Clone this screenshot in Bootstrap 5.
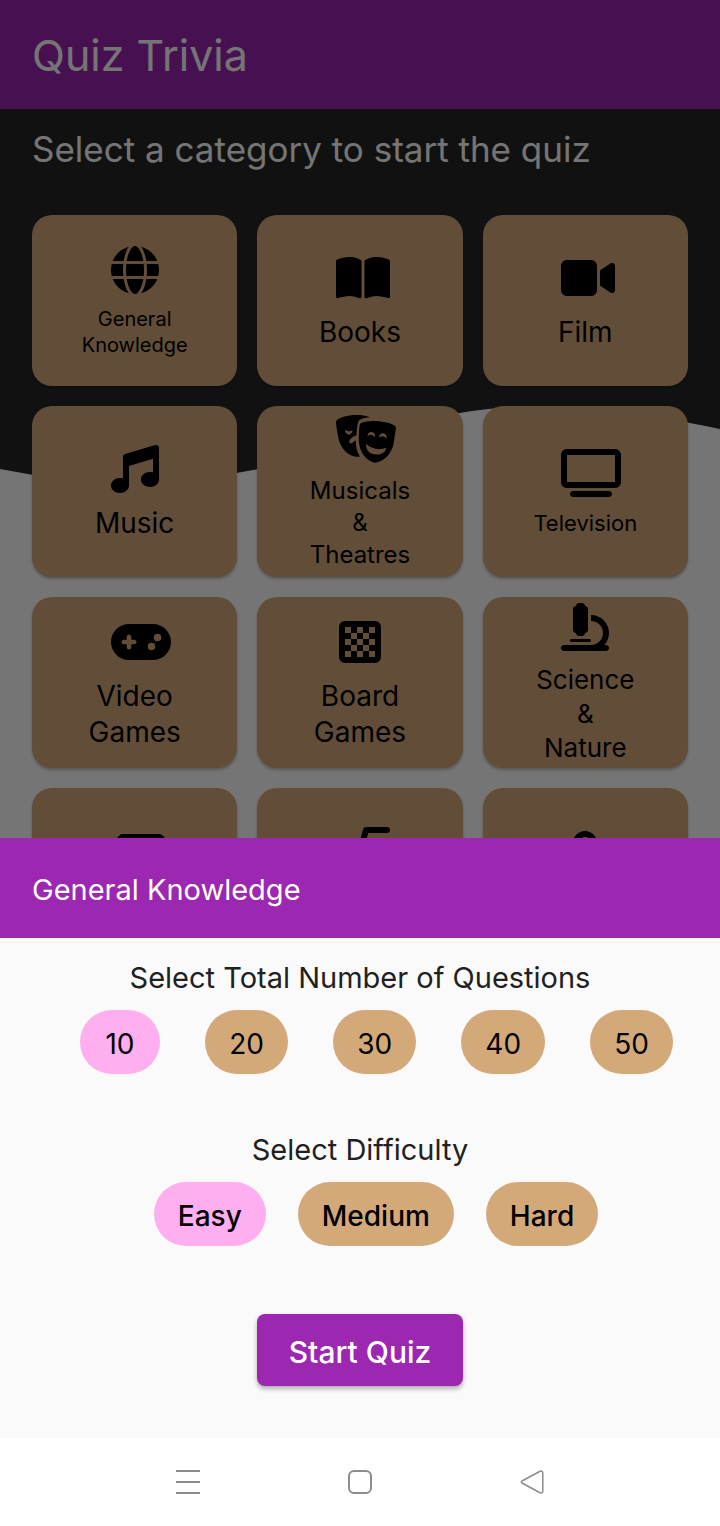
<!DOCTYPE html>
<html lang="en">
<head>
<meta charset="utf-8">
<meta name="viewport" content="width=device-width, initial-scale=1">
<title>Quiz Trivia</title>
<link href="https://cdn.jsdelivr.net/npm/bootstrap@5.3.0/dist/css/bootstrap.min.css" rel="stylesheet">
<style>
  :root { --purple: #9c27b0; --tan: #d4a97a; --pink: #ffaeef; --ink: #272727; }
  body { font-family: Inter, "Open Sans", sans-serif; font-size: 28px; line-height: 36px; color: #000; }
  .app { height: 100vh; min-height: 900px; }
  .screen { min-height: 0; }
  .backdrop { background: rgba(0, 0, 0, .54); z-index: 5; }
  .app-bar { background: var(--purple); height: 109px; padding: 0 32px; }
  .app-bar h1 { font-size: 43px; line-height: 48px; font-weight: 400; }
  .wave { z-index: -1; height: 380px; fill: var(--ink); }
  .intro { padding: 16px 32px 42px; }
  .intro h2 { font-size: 35px; line-height: 48px; font-weight: 400; }
  .tiles-wrap { padding: 0 32px; }
  .categories { --bs-gutter-x: 20px; --bs-gutter-y: 20px; }
  .tile { width: 100%; aspect-ratio: 6 / 5; background: var(--tan); border: 0; border-radius: 20px; padding: 0; color: #000;
    box-shadow: 0 2px 3px rgba(0, 0, 0, .25); gap: 9px; }
  .tile svg { width: 48px; height: 54px; overflow: visible; flex: none; }
  .t-md { font-size: 26px; line-height: 34px; }
  .t-sm { font-size: 24px; line-height: 32px; }
  .t-tv { font-size: 22px; line-height: 28px; }
  .t-xs { font-size: 20px; line-height: 26px; }
  .tile-cut { justify-content: flex-start; padding-top: 40px; }
  .tile-root { padding-top: 33px; }
  .sheet { background: #fafafa; z-index: 6; }
  .sheet-head { background: var(--purple); padding: 34px 32px 30px; }
  .sheet-head h2, legend { font-size: 29px; line-height: 36px; font-weight: 400; }
  .sheet-body { padding: 22px 0 52px; }
  legend { color: #212121; text-align: center; margin-bottom: 14px; }
  .chip { background: var(--tan); border-radius: 32px; padding: 18px 24px 14px; line-height: 32px; font-size: 28px; min-width: 80px; text-align: center; cursor: pointer; }
  .btn-check:checked + .chip { background: var(--pink); }
  .counts { padding: 0 47px 0 80px; }
  .levels { gap: 32px; padding-left: 32px; }
  .levels .chip { font-weight: 500; }
  .group { margin-bottom: 58px; }
  .start { background: var(--purple); color: #fff; font-size: 30px; font-weight: 500; line-height: 36px; padding: 20px 32px 16px; border: 0; border-radius: 8px; margin-top: 10px; box-shadow: 0 3px 5px rgba(0, 0, 0, .3); }
  .system-nav { background: #fff; padding: 32px 0; gap: 148px; }
  .system-nav button { width: 24px; height: 24px; padding: 0; border: 0; background: none; display: flex; }
  .system-nav svg { width: 24px; height: 24px; fill: none; stroke: #8c8c8c; stroke-width: 2; }
</style>
</head>
<body>
<div class="app position-relative d-flex flex-column overflow-hidden bg-white">
  <div class="screen flex-grow-1 overflow-hidden position-relative z-0">
    <header class="app-bar d-flex align-items-center text-white"><h1 class="m-0">Quiz Trivia</h1></header>
    <main class="position-relative z-0">
      <svg class="wave position-absolute top-0 start-0 w-100" viewBox="0 0 720 380" preserveAspectRatio="none" aria-hidden="true"><path d="M0 0V360Q180 397 360 331C470 291 560 286 720 320V0Z"/></svg>
      <div class="intro text-white"><h2 class="m-0">Select a category to start the quiz</h2></div>
      <div class="tiles-wrap">
        <div class="row row-cols-3 categories mt-0">
          <div class="col mt-0"><button class="tile t-xs d-flex flex-column align-items-center justify-content-center"><svg viewBox="0 0 48 54"><path transform="translate(0 3) scale(.09375)" d="M352 256c0 22.2-1.2 43.6-3.3 64H163.3c-2.2-20.4-3.3-41.8-3.3-64s1.2-43.6 3.3-64H348.7c2.2 20.4 3.3 41.8 3.3 64zm28.8-64H503.9c5.3 20.5 8.1 41.9 8.1 64s-2.8 43.5-8.1 64H380.8c2.1-20.6 3.2-42 3.2-64s-1.1-43.4-3.2-64zm112.6-32H376.7c-10-63.9-29.8-117.4-55.3-151.6c78.3 20.7 142 77.5 171.9 151.6zm-149.1 0H167.7c6.1-36.4 15.5-68.6 27-94.7c10.5-23.6 22.2-40.7 33.5-51.5C239.4 3.2 248.7 0 256 0s16.6 3.2 27.8 13.8c11.3 10.8 23 27.9 33.5 51.5c11.6 26 20.9 58.2 27 94.7zm-209 0H18.6C48.6 85.9 112.2 29.1 190.6 8.4C165.1 42.6 145.3 96.1 135.3 160zM8.1 192H131.2c-2.1 20.6-3.2 42-3.2 64s1.1 43.4 3.2 64H8.1C2.8 299.5 0 278.1 0 256s2.8-43.5 8.1-64zM194.7 446.6c-11.6-26-20.9-58.2-27-94.6H344.3c-6.1 36.4-15.5 68.6-27 94.6c-10.5 23.6-22.2 40.7-33.5 51.5C272.6 508.8 263.3 512 256 512s-16.6-3.2-27.8-13.8c-11.3-10.8-23-27.9-33.5-51.5zM135.3 352c10 63.9 29.8 117.4 55.3 151.6C112.2 482.9 48.6 426.1 18.6 352H135.3zm358.1 0c-30 74.1-93.6 130.9-171.9 151.6c25.5-34.2 45.2-87.7 55.3-151.6H493.4z"/></svg><span>General<br>Knowledge</span></button></div>
          <div class="col mt-0"><button class="tile d-flex flex-column align-items-center justify-content-center"><svg viewBox="0 0 48 54"><path transform="translate(0 3) scale(.09375)" d="M249.6 471.5c10.8 3.8 22.4-4.1 22.4-15.5V78.6c0-4.2-1.6-8.4-5-11C247.4 52 202.4 32 144 32C93.5 32 46.3 45.3 18.1 56.1C6.8 60.5 0 71.7 0 83.8V454.1c0 11.9 12.8 20.2 24.1 16.5C55.6 460.1 105.5 448 144 448c33.9 0 79 14 105.6 23.5zm76.8 0C353 462 398.1 448 432 448c38.5 0 88.4 12.1 119.9 22.6c11.3 3.8 24.1-4.6 24.1-16.5V83.8c0-12.1-6.8-23.3-18.1-27.6C529.7 45.3 482.5 32 432 32c-58.4 0-103.4 20-123 35.6c-3.3 2.6-5 6.8-5 11V456c0 11.4 11.7 19.3 22.4 15.5z"/></svg><span>Books</span></button></div>
          <div class="col mt-0"><button class="tile d-flex flex-column align-items-center justify-content-center"><svg viewBox="0 0 48 54"><path transform="translate(0 3) scale(.09375)" d="M0 128C0 92.7 28.7 64 64 64H320c35.3 0 64 28.7 64 64V384c0 35.3-28.7 64-64 64H64c-35.3 0-64-28.7-64-64V128zM559.1 99.8c10.4 5.6 16.9 16.4 16.9 28.2V384c0 11.8-6.5 22.6-16.9 28.2s-23 5-32.9-1.6l-96-64L416 337.1V320 192 174.9l14.2-9.5 96-64c9.8-6.5 22.4-7.2 32.9-1.6z"/></svg><span>Film</span></button></div>

          <div class="col"><button class="tile d-flex flex-column align-items-center justify-content-center"><svg viewBox="0 0 48 54"><path transform="translate(0 3) scale(.09375)" d="M499.1 6.3c8.1 6 12.9 15.6 12.9 25.7v72V368c0 44.2-43 80-96 80s-96-35.8-96-80s43-80 96-80c11.2 0 22 1.6 32 4.6V147L192 223.8V432c0 44.2-43 80-96 80s-96-35.8-96-80s43-80 96-80c11.2 0 22 1.6 32 4.6V200 128c0-14.1 9.3-26.6 22.8-30.7l320-96c9.7-2.9 20.2-1.1 28.3 5z"/></svg><span>Music</span></button></div>
          <div class="col"><button class="tile t-sm d-flex flex-column align-items-center justify-content-center"><svg viewBox="0 0 48 54"><path fill-rule="evenodd" d="M1.5 7.5C9 3 23 1.500 34 5.200C29 5.500 23.500 7 22.300 9.500C21.500 12 21 17 20.300 23.500C17.500 24 14 26.500 13.200 29.500C13 31.500 15.500 32 16.500 30.800C17.500 29.500 18.800 28.700 19.900 28.500C19.600 35 21 40 24 44.600C14 46.500 5 37 2.700 27.500C1.500 22 .5 16 0 11C-.1 9.500.3 8.300 1.500 7.500ZM9 17.500C9 24 16.500 24 16.500 18C14 20 11.500 19.500 9 17.500Z"/><path fill-rule="evenodd" d="M25 11C31 7.500 51 8.500 58.500 13.500C59.800 14.500 60.100 15.500 59.800 17.500L57.500 32C55.500 43 46 50.500 38.500 50.700C31 49 23.500 41 22.800 29C22.600 24 23 19 23.600 13.500C23.700 12.300 24.200 11.500 25 11ZM31.500 24.500C33.500 22 37 22.300 39 25.500C40.500 19 31.500 17.500 31.500 24.500ZM43.200 25.700C45.500 23.500 48.500 24 50.500 27C52 20.500 43.200 19 43.200 25.700ZM30 32C30 39 34 42.300 40 42.600C45.500 42.800 49.500 40.500 50.300 35.800C43 38.500 36 37 30 32Z"/></svg><span>Musicals<br>&amp;<br>Theatres</span></button></div>
          <div class="col"><button class="tile t-tv d-flex flex-column align-items-center justify-content-center"><svg viewBox="0 0 48 54"><path transform="translate(0 3) scale(.09375)" d="M64 64V352H576V64H64zM0 64C0 28.700 28.700 0 64 0H576c35.300 0 64 28.700 64 64V352c0 35.300-28.700 64-64 64H64c-35.300 0-64-28.700-64-64V64zM128 448H512c17.700 0 32 14.300 32 32s-14.300 32-32 32H128c-17.700 0-32-14.300-32-32s14.300-32 32-32z"/></svg><span>Television</span></button></div>

          <div class="col"><button class="tile d-flex flex-column align-items-center justify-content-center"><svg viewBox="0 0 48 54"><path fill-rule="evenodd" transform="translate(0 3) scale(.09375)" d="M192 64C86 64 0 150 0 256S86 448 192 448H448c106 0 192-86 192-192s-86-192-192-192H192zM496 168a40 40 0 1 1 0 80 40 40 0 1 1 0-80zM392 304a40 40 0 1 1 80 0 40 40 0 1 1 -80 0zM168 200c0-13.300 10.700-24 24-24s24 10.700 24 24v32h32c13.300 0 24 10.700 24 24s-10.700 24-24 24H216v32c0 13.300-10.700 24-24 24s-24-10.700-24-24V280H136c-13.300 0-24-10.700-24-24s10.700-24 24-24h32V200z"/></svg><span>Video<br>Games</span></button></div>
          <div class="col"><button class="tile d-flex flex-column align-items-center justify-content-center"><svg viewBox="0 0 48 54"><path fill-rule="evenodd" d="M9 6H39a6 6 0 0 1 6 6V42a6 6 0 0 1-6 6H9a6 6 0 0 1-6-6V12a6 6 0 0 1 6-6ZM9 12h6v6h-6ZM21 12h6v6h-6ZM33 12h6v6h-6ZM15 18h6v6h-6ZM27 18h6v6h-6ZM9 24h6v6h-6ZM21 24h6v6h-6ZM33 24h6v6h-6ZM15 30h6v6h-6ZM27 30h6v6h-6ZM9 36h6v6h-6ZM21 36h6v6h-6ZM33 36h6v6h-6Z"/></svg><span>Board<br>Games</span></button></div>
          <div class="col"><button class="tile t-md d-flex flex-column align-items-center justify-content-center"><svg viewBox="0 0 48 54"><path transform="translate(0 3) scale(.09375)" d="M160 32c0-17.700 14.300-32 32-32h32c17.700 0 32 14.300 32 32c17.700 0 32 14.300 32 32V288c0 17.700-14.300 32-32 32c0 17.700-14.300 32-32 32H192c-17.700 0-32-14.300-32-32c-17.700 0-32-14.300-32-32V64c0-17.700 14.300-32 32-32zM32 448H320c70.700 0 128-57.300 128-128s-57.300-128-128-128V128c106 0 192 86 192 192c0 49.200-18.500 94-48.900 128H480c17.700 0 32 14.300 32 32s-14.300 32-32 32H320 32c-17.700 0-32-14.300-32-32s14.300-32 32-32zm80-64H304c8.800 0 16 7.200 16 16s-7.200 16-16 16H112c-8.800 0-16-7.200-16-16s7.200-16 16-16z"/></svg><span>Science<br>&amp;<br>Nature</span></button></div>

          <div class="col"><button class="tile tile-cut d-flex flex-column align-items-center" aria-label="Computers"><svg viewBox="0 0 48 54"><path transform="translate(0 3) scale(.09375)" d="M128 32C92.700 32 64 60.700 64 96V352h64V96H512V352h64V96c0-35.300-28.700-64-64-64H128zM19.200 384C8.600 384 0 392.600 0 403.200C0 445.600 34.400 480 76.800 480H563.200c42.400 0 76.800-34.400 76.800-76.800c0-10.600-8.600-19.200-19.200-19.200H19.200z"/></svg></button></div>
          <div class="col"><button class="tile tile-cut tile-root d-flex flex-column align-items-center" aria-label="Mathematics"><svg viewBox="0 0 48 54"><path fill="none" stroke="#000" stroke-width="6" stroke-linecap="round" stroke-linejoin="round" d="M3 27H9L20 45L30 9H51"/></svg></button></div>
          <div class="col"><button class="tile tile-cut d-flex flex-column align-items-center" aria-label="Mythology"><svg viewBox="0 0 48 54"><path fill="none" stroke="#000" stroke-width="6" stroke-linecap="round" d="M24 30C18 24 15 19 15 15a9 9 0 0 1 18 0C33 19 30 24 24 30ZM9 30H39M24 30V48"/></svg></button></div>
        </div>
      </div>
    </main>
    <div class="backdrop position-absolute top-0 start-0 w-100 h-100"></div>
  </div>

  <section class="sheet flex-shrink-0" aria-label="Quiz options">
    <div class="sheet-head text-white"><h2 class="m-0">General Knowledge</h2></div>
    <form class="sheet-body text-center" onsubmit="return false">
      <fieldset class="group">
        <legend>Select Total Number of Questions</legend>
        <div class="counts d-flex justify-content-between">
          <input class="btn-check" type="radio" name="count" id="n10" checked><label class="chip" for="n10">10</label>
          <input class="btn-check" type="radio" name="count" id="n20"><label class="chip" for="n20">20</label>
          <input class="btn-check" type="radio" name="count" id="n30"><label class="chip" for="n30">30</label>
          <input class="btn-check" type="radio" name="count" id="n40"><label class="chip" for="n40">40</label>
          <input class="btn-check" type="radio" name="count" id="n50"><label class="chip" for="n50">50</label>
        </div>
      </fieldset>
      <fieldset class="group">
        <legend>Select Difficulty</legend>
        <div class="levels d-flex justify-content-center">
          <input class="btn-check" type="radio" name="level" id="easy" checked><label class="chip" for="easy">Easy</label>
          <input class="btn-check" type="radio" name="level" id="medium"><label class="chip" for="medium">Medium</label>
          <input class="btn-check" type="radio" name="level" id="hard"><label class="chip" for="hard">Hard</label>
        </div>
      </fieldset>
      <button class="start" type="submit">Start Quiz</button>
    </form>
  </section>

  <nav class="system-nav flex-shrink-0 d-flex justify-content-center" aria-label="System">
    <button aria-label="Recent apps"><svg viewBox="0 0 24 24"><path d="M0 1H24M0 12H24M0 23H24"/></svg></button>
    <button aria-label="Home"><svg viewBox="0 0 24 24"><rect x="1" y="1" width="22" height="22" rx="5"/></svg></button>
    <button aria-label="Back"><svg viewBox="0 0 24 24"><path stroke-width="1.500" d="M2 11L20 1.300Q22.800 .5 22.800 3V21Q22.800 23.500 20 22.700L2 13Q.5 12 2 11Z"/></svg></button>
  </nav>
</div>
<script src="https://cdn.jsdelivr.net/npm/bootstrap@5.3.0/dist/js/bootstrap.bundle.min.js"></script>
</body>
</html>
